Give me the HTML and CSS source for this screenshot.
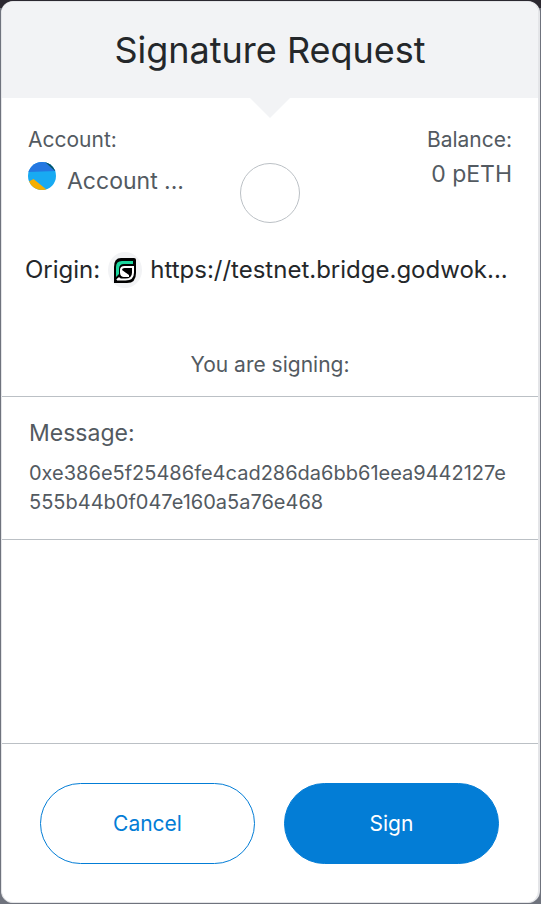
FILE: index.html
```html
<!DOCTYPE html>
<html lang="en">
<head>
<meta charset="utf-8">
<meta name="viewport" content="width=device-width, initial-scale=1">
<title>Signature Request</title>
<link rel="stylesheet" href="styles.css">
</head>
<body>
<main class="card">
  <header class="header">
    <h1 class="title">Signature Request</h1>
  </header>
  <section class="account-row">
    <div class="account">
      <div class="label">Account:</div>
      <div class="account-name">
        <svg class="avatar" viewBox="0 0 28 28" aria-hidden="true">
          <defs><clipPath id="disc"><circle cx="14" cy="14" r="14"/></clipPath></defs>
          <g clip-path="url(#disc)">
            <path fill="#18aaf2" d="M0 0h28v28H0z"/>
            <path fill="#2477e1" d="M0 0h28v9L0 10z"/>
            <path fill="#01555d" d="M17 0l10 9h1V0z"/>
            <path fill="#f5ae00" d="M0 20l5.500-3L19 28H0z"/>
          </g>
        </svg>
        <span>Account ...</span>
      </div>
    </div>
    <div class="request-icon"></div>
    <div class="balance">
      <div class="label">Balance:</div>
      <div class="balance-value">0 pETH</div>
    </div>
  </section>
  <section class="origin">
    <span>Origin:</span>
    <span class="site-icon">
      <svg viewBox="0 0 22 25" width="22" height="25" aria-hidden="true">
        <path fill="#000" d="M7 0h13q2 0 2 2v13q0 10-9 10H0V9q0-9 7-9z"/>
        <path fill="#1cd59e" d="M8 3h11v3H10q-5 0-5 5v5l-3 3V9q0-6 6-6z"/>
        <path fill="none" stroke="#fff" stroke-width="2" d="M20 9h-9.500Q7 9 7 12v2.500Q7 18 10.500 18H14M19 9v5.500q0 7-7.500 7H3"/>
        <path fill="#fff" d="M8 12l7 5v2h-4q-3 0-3-3zM2 22l3-3 3 3z"/>
        <path fill="#000" d="M9.500 11.500H18q0 4-3 6v-3h-3z"/>
      </svg>
    </span>
    <span class="origin-url">https://testnet.bridge.godwok...</span>
  </section>
  <p class="notice">You are signing:</p>
  <section class="message">
    <h2 class="message-title">Message:</h2>
    <p class="message-text">0xe386e5f25486fe4cad286da6bb61eea9442127e555b44b0f047e160a5a76e468</p>
  </section>
  <footer class="footer">
    <button type="button" class="button">Cancel</button>
    <button type="button" class="button button-primary">Sign</button>
  </footer>
</main>
</body>
</html>
```
FILE: styles.css
```css
* { box-sizing: border-box; }

body {
  margin: 0;
  min-height: 100vh;
  display: flex;
  padding: 1px;
  background: linear-gradient(#2b2830 0, #2b2830 8px, #6f737d 8px);
  font-family: Inter, "Liberation Sans", sans-serif;
  color: #535a61;
}

h1, h2, p { margin: 0; font-weight: 400; }

.card {
  flex: 1;
  min-width: 0;
  display: flex;
  flex-direction: column;
  overflow: hidden;
  border: 1px solid #e4e5e8;
  border-right-width: 2px;
  border-radius: 12px;
  background: #fff;
}

.header {
  position: relative;
  padding: 24px 16px;
  background: #f2f3f5;
  text-align: center;
}

.header::after {
  content: "";
  position: absolute;
  top: 100%;
  left: 50%;
  margin-left: -20px;
  border: 20px solid transparent;
  border-top-color: #f2f3f5;
  border-bottom: 0;
}

.title { font-size: 36px; line-height: 48px; color: #24272a; }

.account-row {
  display: grid;
  grid-template-columns: 1fr 60px 1fr;
  padding: 28px 26px 0;
}

.label { font-size: 21px; line-height: 28px; }

.account-name {
  display: flex;
  gap: 11px;
  padding-top: 8px;
  font-size: 23px;
  line-height: 38px;
  white-space: nowrap;
}

.avatar { width: 28px; height: 28px; }

.request-icon {
  height: 60px;
  margin-top: 37px;
  border: 1px solid #bbc0c5;
  border-radius: 50%;
}

.balance { text-align: right; }
.balance-value { padding-top: 4px; font-size: 23px; line-height: 32px; }

.origin {
  display: flex;
  align-items: center;
  gap: 8px;
  padding: 29px 24px 0 23px;
  font-size: 24px;
  line-height: 36px;
  color: #24272a;
}

.origin-url { overflow: hidden; text-overflow: ellipsis; white-space: nowrap; }

.site-icon {
  flex: none;
  display: flex;
  align-items: center;
  justify-content: center;
  width: 34px;
  height: 36px;
  border-radius: 50%;
  background: #f2f3f5;
}

.notice {
  padding: 63px 16px 17px;
  border-bottom: 1px solid #bbc0c5;
  text-align: center;
  font-size: 21px;
  line-height: 28px;
}

.message {
  padding: 20px 26px 22px 27px;
  border-bottom: 1px solid #bbc0c5;
}

.message-title { font-size: 23px; line-height: 32px; }

.message-text {
  padding-top: 10px;
  font-size: 20px;
  line-height: 29px;
  word-break: break-all;
}

.footer {
  display: flex;
  gap: 29px;
  margin-top: auto;
  padding: 39px 39px 38px 38px;
  border-top: 1px solid #bbc0c5;
}

.button {
  flex: 1;
  height: 81px;
  border: 1px solid #037dd6;
  border-radius: 41px;
  background: #fff;
  color: #037dd6;
  font-family: inherit;
  font-size: 21px;
}

.button-primary { background: #037dd6; color: #fff; }
```
